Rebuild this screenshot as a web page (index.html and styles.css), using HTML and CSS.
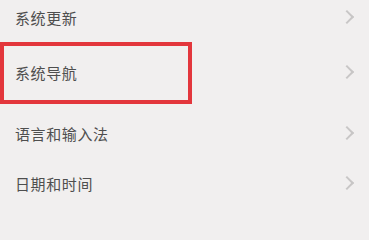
FILE: index.html
```html
<!DOCTYPE html>
<html lang="zh">
<head>
<meta charset="utf-8">
<link rel="stylesheet" href="styles.css">
</head>
<body>
<div class="list">
  <div class="row row-1"><span class="label">系统更新</span><span class="chev"></span></div>
  <div class="row row-2"><span class="label">系统导航</span><span class="chev"></span></div>
  <div class="row row-3"><span class="label">语言和输入法</span><span class="chev"></span></div>
  <div class="row row-4"><span class="label">日期和时间</span><span class="chev"></span></div>
  <div class="highlight"></div>
</div>
</body>
</html>
```
FILE: styles.css
```css
html, body {
  margin: 0;
  padding: 0;
  background: #f1efef;
}
.list {
  position: relative;
  width: 369px;
  height: 211px;
  overflow: hidden;
  display: flex;
  flex-direction: column;
  font-family: "Noto Sans CJK SC", "Noto Sans", sans-serif;
}
.row {
  display: flex;
  align-items: center;
  justify-content: space-between;
  padding: 0 17px 0 15px;
}
.row-1 { height: 34px; }
.row-2 { height: 76px; }
.row-3 { height: 46px; }
.row-4 { height: 54px; }
.label {
  font-size: 15px;
  line-height: 1;
  color: #4e4e4e;
  letter-spacing: 0.6px;
}
.chev {
  width: 8px;
  height: 8px;
  border-top: 2px solid #c8c6c6;
  border-right: 2px solid #c8c6c6;
  transform: rotate(45deg);
}
.highlight {
  position: absolute;
  left: 0;
  top: 42px;
  width: 192px;
  height: 62px;
  box-sizing: border-box;
  border: 4px solid #e3363c;
}
```
